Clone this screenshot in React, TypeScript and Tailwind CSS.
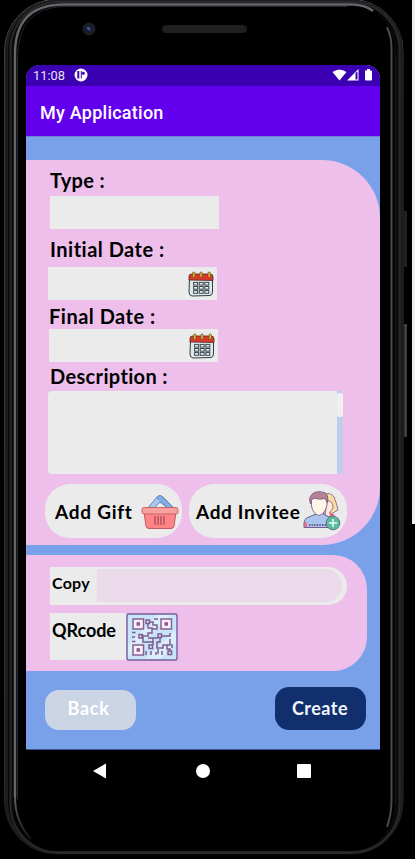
import React from "react";

const hand = "font-['Lato','Open_Sans',sans-serif] font-bold text-black whitespace-nowrap origin-left";

function PhoneFrame() {
  return (
    <svg className="absolute inset-0" width="415" height="859" viewBox="0 0 415 859" fill="none" aria-hidden="true">
      <defs>
        <linearGradient id="rim" x1="0" y1="0" x2="0" y2="859" gradientUnits="userSpaceOnUse">
          <stop offset="0" stopColor="#85868a" />
          <stop offset=".07" stopColor="#3c3d3f" />
          <stop offset=".9" stopColor="#303030" />
          <stop offset="1" stopColor="#080808" />
        </linearGradient>
        <linearGradient id="glint" x1="0" y1="795" x2="0" y2="842" gradientUnits="userSpaceOnUse">
          <stop offset="0" stopColor="#63656b" />
          <stop offset="1" stopColor="#111" />
        </linearGradient>
      </defs>
      <rect x="412" y="0" width="3" height="524" fill="#efefef" />
      <rect x="404" y="211" width="3" height="56" fill="#202121" />
      <rect x="404" y="325" width="2.5" height="112" fill="#303030" />
      <path d="M406 325v112M404 325h3" stroke="#5c5c5c" />
      <rect x="4.5" y="-.5" width="398.5" height="854.5" rx="52" fill="#090909" stroke="url(#rim)" />
      <rect x="6.5" y="1" width="395" height="851.5" rx="50" stroke="#1c1d1d" strokeWidth="3" />
      <rect x="10.5" y="2" width="389" height="850.5" rx="48" stroke="#282929" strokeWidth="2" />
      <rect x="14" y="4" width="380" height="847" rx="44" fill="#000" />
      <path d="M15 797V54Q15 4.500 64 4.500H352Q366 5 373 11" stroke="#63656b" strokeWidth="2.5" />
      <path d="M15 797Q15 822 31 839" stroke="url(#glint)" strokeWidth="2" />
      <path d="M17.500 800V58Q18 7 64 6.500H347" stroke="#25262a" strokeWidth="1" />
      <path d="M387 27Q391.500 37 391.500 48V802Q391 816 387 827" stroke="#4b4b50" strokeWidth="2" />
      <path d="M395.500 55V805" stroke="#111" strokeWidth="2" />
      <path d="M58 853H350" stroke="#2b2b2b" strokeWidth="2" />
      <circle cx="89" cy="29" r="6.500" fill="#1c1e22" />
      <circle cx="89" cy="29" r="4" fill="#171e35" />
      <circle cx="89" cy="29" r="1.800" fill="#334677" />
      <circle cx="88" cy="28" r=".7" fill="#8399c4" />
      <rect x="162" y="25" width="85" height="8" rx="4" fill="#1d1f1e" />
      <path d="M165 28h79M165 31h79" stroke="#2b2d2b" strokeDasharray="1 1" />
    </svg>
  );
}

function CalendarIcon() {
  return (
    <svg width="26" height="26" viewBox="0 0 26 26" className="block">
      <path d="M1.500 7H24.500V21Q24.500 24 22 24.500L4 25Q1 24.500 1 21Z" fill="#dceaf0" stroke="#353b40" strokeWidth="1" />
      <path d="M1 9V5Q1 3 4 3H22Q25 3 25 6V9.500Z" fill="#d8382c" stroke="#58241e" strokeWidth=".8" />
      <g fill="#dcae35" stroke="#69561f" strokeWidth=".7">
        <rect x="4.500" y="1" width="2.500" height="5.500" rx="1.200" />
        <rect x="11.800" y="1" width="2.500" height="5.500" rx="1.200" />
        <rect x="20" y="1" width="2.500" height="5.500" rx="1.200" />
      </g>
      <g fill="#e9f0f1" stroke="#3c464b" strokeWidth="1">
        {[0, 1, 2].map((r) => [0, 1, 2].map((c) => (
          <rect key={`${r}-${c}`} x={5.6 + c * 5.6} y={11.4 + r * 4.1} width="4" height="2.700" />
        )))}
      </g>
    </svg>
  );
}

function BasketIcon() {
  return (
    <svg width="38" height="36" viewBox="0 0 38 36" className="block" strokeLinejoin="round">
      <path d="M6 15L16 3Q19 0 22 3L33 14L29 16L19 8L11 16Z" fill="#a5c9f2" stroke="#6686b8" />
      <path d="M15.500 3.500L19 1L33 14L29 16Z" fill="#80aee8" stroke="#6686b8" strokeWidth=".7" />
      <path d="M3 18H35L33 32Q32.500 34.500 30 34.500H8Q5.500 34.500 5 32Z" fill="#ff8584" stroke="#bd5962" />
      <rect x="1" y="13.500" width="36" height="6.500" rx="2" fill="#faa09f" stroke="#c6666b" />
      <path d="M14 22v9M17 22v9M20 22v9M23 22v9" stroke="#a34752" strokeWidth="1.200" />
    </svg>
  );
}

function InviteeIcon() {
  return (
    <svg width="38" height="40" viewBox="0 0 38 40" className="block" strokeLinejoin="round">
      <path d="M20 4Q27 0 31 6Q34 13 35 19L28 23L20 22Z" fill="#f8dfa0" stroke="#9c7095" />
      <path d="M24 10Q30 9 30 17L27 21L29 26L22 25Z" fill="#fcecdd" stroke="#9c7095" />
      <path d="M26 21L32 24L28 28Z" fill="#de6381" />
      <path d="M1 36.500Q0 27 6 26L13 23V19H20V23L26 26Q32 28 31 36.500Z" fill="#a9c5eb" stroke="#775d94" />
      <path d="M8.500 8Q16 4 24 8V14Q22 23 16 24.500Q10 23 8.500 15Z" fill="#fff5e9" stroke="#8c6b91" />
      <path d="M7.500 13Q5 6 10 2.500Q14-.5 21 1.500Q26 3 24.500 12L22 7.500Q16 9 11 7L8.500 9Z" fill="#b58391" stroke="#80608d" />
      <path d="M6 34H26" stroke="#664d83" strokeWidth="2" strokeDasharray="1.300 1.300" />
      <path d="M1 31Q4 30 4 36H1Z" fill="#df6b82" />
      <circle cx="30" cy="32" r="6.800" fill="#5dbb9e" stroke="#56768c" />
      <path d="M26 32H34M30 28V36" stroke="#effff9" strokeWidth="1.500" />
    </svg>
  );
}

function QrIcon() {
  return (
    <svg width="52" height="48" viewBox="0 0 52 48" className="block shrink-0">
      <rect x="1" y="1" width="50" height="46" rx="1.500" fill="#c9e3fb" stroke="#755e9d" strokeWidth="1.400" />
      <path d="M2 32L31 2H45L2 43ZM19 46L50 17V30L34 46Z" fill="#dcedfc" />
      <g fill="#fbefff" stroke="#86618f" strokeWidth="1.500">
        <rect x="7" y="6" width="10.500" height="10" />
        <rect x="35" y="6" width="10.500" height="10" />
        <rect x="7" y="32" width="10.500" height="10" />
      </g>
      <g fill="#8c5f87" stroke="#8c5f87" strokeWidth="1">
        <rect x="11" y="9.700" width="2.500" height="2.500" />
        <rect x="39" y="9.700" width="2.500" height="2.500" />
        <rect x="11" y="35.700" width="2.500" height="2.500" />
      </g>
      <g stroke="#805c8e" strokeWidth="1.500" fill="none">
        <path d="M6 19.500h3.500M6 24h3M6 28.500h3.500M22 10.500v4.500h5M24 9h3v3h4v4h-5v4h-4v3h-7M22 25h10M36 23h8v-3M28 6h4M27 25v7M17 24v5h10M34 25v4h-3v6h6v-3h7v-6M32 36v5M41 32v4h3v2M20 38v4M25 38v4M30 39v3M36 38v4M46 31v4" />
        <rect x="13" y="21.500" width="3.500" height="3.500" />
        <rect x="20" y="7" width="3.500" height="3.500" />
        <rect x="32" y="21" width="3.500" height="3.500" />
        <rect x="23" y="32" width="3.500" height="3.500" />
        <rect x="42" y="38" width="3.500" height="3.500" />
      </g>
    </svg>
  );
}

function DateField({ className }: { className: string }) {
  return (
    <div className={`flex h-[33px] w-[169px] items-center justify-end bg-[#ebebeb] ${className}`}>
      <CalendarIcon />
    </div>
  );
}

export default function App() {
  return (
    <main className="relative h-[859px] w-[415px] overflow-hidden bg-black px-[26px] pt-[65px]">
      <PhoneFrame />
      <div className="relative w-[354px]">
        <div className="overflow-hidden rounded-t-[14px] bg-[#79a1e9]">
          <header className="font-['Roboto',sans-serif] text-white">
            <div className="flex h-[21px] items-center bg-[#3a00b1] pl-[7px] pr-[2px]">
              <span className="w-[41px] text-[12.800px] leading-5 text-[#e8e1f8]">11:08</span>
              <svg width="14" height="14" viewBox="0 0 14 14" className="-mt-px">
                <circle cx="7" cy="7" r="6.500" fill="white" />
                <path d="M4.300 3V10.500" stroke="#3a00b1" strokeWidth="2" />
                <path d="M7.300 3V10.500" stroke="#3a00b1" strokeWidth="1" />
                <circle cx="9.300" cy="5.200" r="1.500" fill="#3a00b1" />
              </svg>
              <svg width="46" height="14" viewBox="0 0 46 14" className="-mt-px ml-auto" fill="white">
                <path d="M.5 4Q7.500-1 14.500 4L7.500 12.500Z" />
                <path d="M15 12.500L26.500 1V12.500Z" />
                <path d="M23.500 5L25.500 3.500V11.500H23.500Z" fill="#3a00b1" />
                <path d="M33 2.500H35V1H38V2.500H39Q40 2.500 40 3.500V11.500Q40 12.500 39 12.500H34Q33 12.500 33 11.500Z" />
              </svg>
            </div>
            <div className="flex h-[50px] items-center bg-[#6200ed] pl-[14px] pt-[2px] text-[18px] font-medium tracking-[0.25px]">
              My Application
            </div>
          </header>
          <div className="flex h-[614px] flex-col border-t border-[#7181cb] border-b border-b-[#385490] pt-[23px]">
            <section className="h-[385px] w-[354px] rounded-tr-[58px] rounded-br-[58px] bg-[#edbfea] pl-[19px] pt-[7px]">
              <div className="flex h-[29px] items-center pb-[4px] pl-[5px]">
                <span className={`${hand} text-[20px] tracking-[0.35px]`}>Type :</span>
              </div>
              <div className="ml-[5px] h-[33px] w-[169px] bg-[#ebebeb]" />
              <div className="flex h-[38px] items-center pl-[5px] pt-[2px]">
                <span className={`${hand} text-[20px] tracking-[0.5px]`}>Initial Date :</span>
              </div>
              <DateField className="ml-[3px] pr-[3px]" />
              <div className="flex h-[29px] items-center pl-[4px] pt-[2px]">
                <span className={`${hand} text-[20px] tracking-[0.5px]`}>Final Date :</span>
              </div>
              <DateField className="ml-[4px] pr-[3px]" />
              <div className="flex h-[29px] items-center pb-[2px] pl-[5px]">
                <span className={`${hand} text-[20px] tracking-[0.35px]`}>Description :</span>
              </div>
              <div className="ml-[3px] flex h-[83px] w-[295px] overflow-hidden rounded-[4px] bg-[#c0cceb]">
                <div className="w-[289px] bg-[#ebebeb]" />
                <div className="mt-[2px] h-[24px] w-[6px] rounded-[2px] bg-[#f0f0f3]" />
              </div>
              <div className="mt-[10px] flex gap-[7px]">
                <button className="flex h-[54px] w-[137px] items-center justify-between rounded-[25px] bg-[#ebebeb] pl-[10px] pr-[4px]">
                  <span className={`${hand} pt-[3px] text-[19px] tracking-[0.75px]`}>Add Gift</span>
                  <span className="-mr-px mt-[2px] shrink-0"><BasketIcon /></span>
                </button>
                <button className="flex h-[54px] w-[158px] items-center justify-between rounded-[25px] bg-[#ebebeb] pl-[7px] pr-[6px]">
                  <span className={`${hand} pt-[3px] text-[19px] tracking-[0.65px]`}>Add Invitee</span>
                  <span className="shrink-0"><InviteeIcon /></span>
                </button>
              </div>
            </section>
            <section className="mt-[10px] h-[116px] w-[341px] rounded-r-[34px] bg-[#edbfea] pl-[24px] pt-[12px]">
              <div className="flex h-[38px] w-[297px] rounded-r-[19px] bg-[#ebebeb]">
                <span className={`${hand} w-[47px] pl-[2px] pt-[4px] text-[16px] tracking-[0.25px]`}>Copy</span>
                <div className="mt-[2px] h-[33px] w-[245px] rounded-r-[17px] bg-[#ebdbea]" />
              </div>
              <div className="mt-[8px] flex h-[47px]">
                <div className="w-[76px] bg-[#ebebeb] pl-[2px] pt-[4px]">
                  <span className={`${hand} block text-[18px] tracking-[-0.050px]`}>QRcode</span>
                </div>
                <QrIcon />
              </div>
            </section>
            <div className="mt-[16px] flex justify-between pl-[19px] pr-[14px]">
              <button className="mt-[3px] h-10 w-[91px] rounded-[14px] bg-[#cbd5e6] pb-[3px] pr-[4px] font-['Lato',sans-serif] text-[18px] font-bold tracking-[0.7px] text-white">Back</button>
              <button className="h-[43px] w-[91px] rounded-[14px] bg-[#102f6c] pb-px pr-[1px] font-['Lato',sans-serif] text-[18px] font-bold tracking-[0.5px] text-[#f2f7ff]">Create</button>
            </div>
          </div>
        </div>
        <nav className="flex h-[42px] items-center pl-[66px]">
          <svg width="14" height="16" viewBox="0 0 14 16"><path d="M14 .5V15.500L1 8Z" fill="white" /></svg>
          <div className="ml-[90px] size-[14px] rounded-full bg-white" />
          <div className="ml-[87px] size-[14px] rounded-[1px] bg-white" />
        </nav>
      </div>
    </main>
  );
}
